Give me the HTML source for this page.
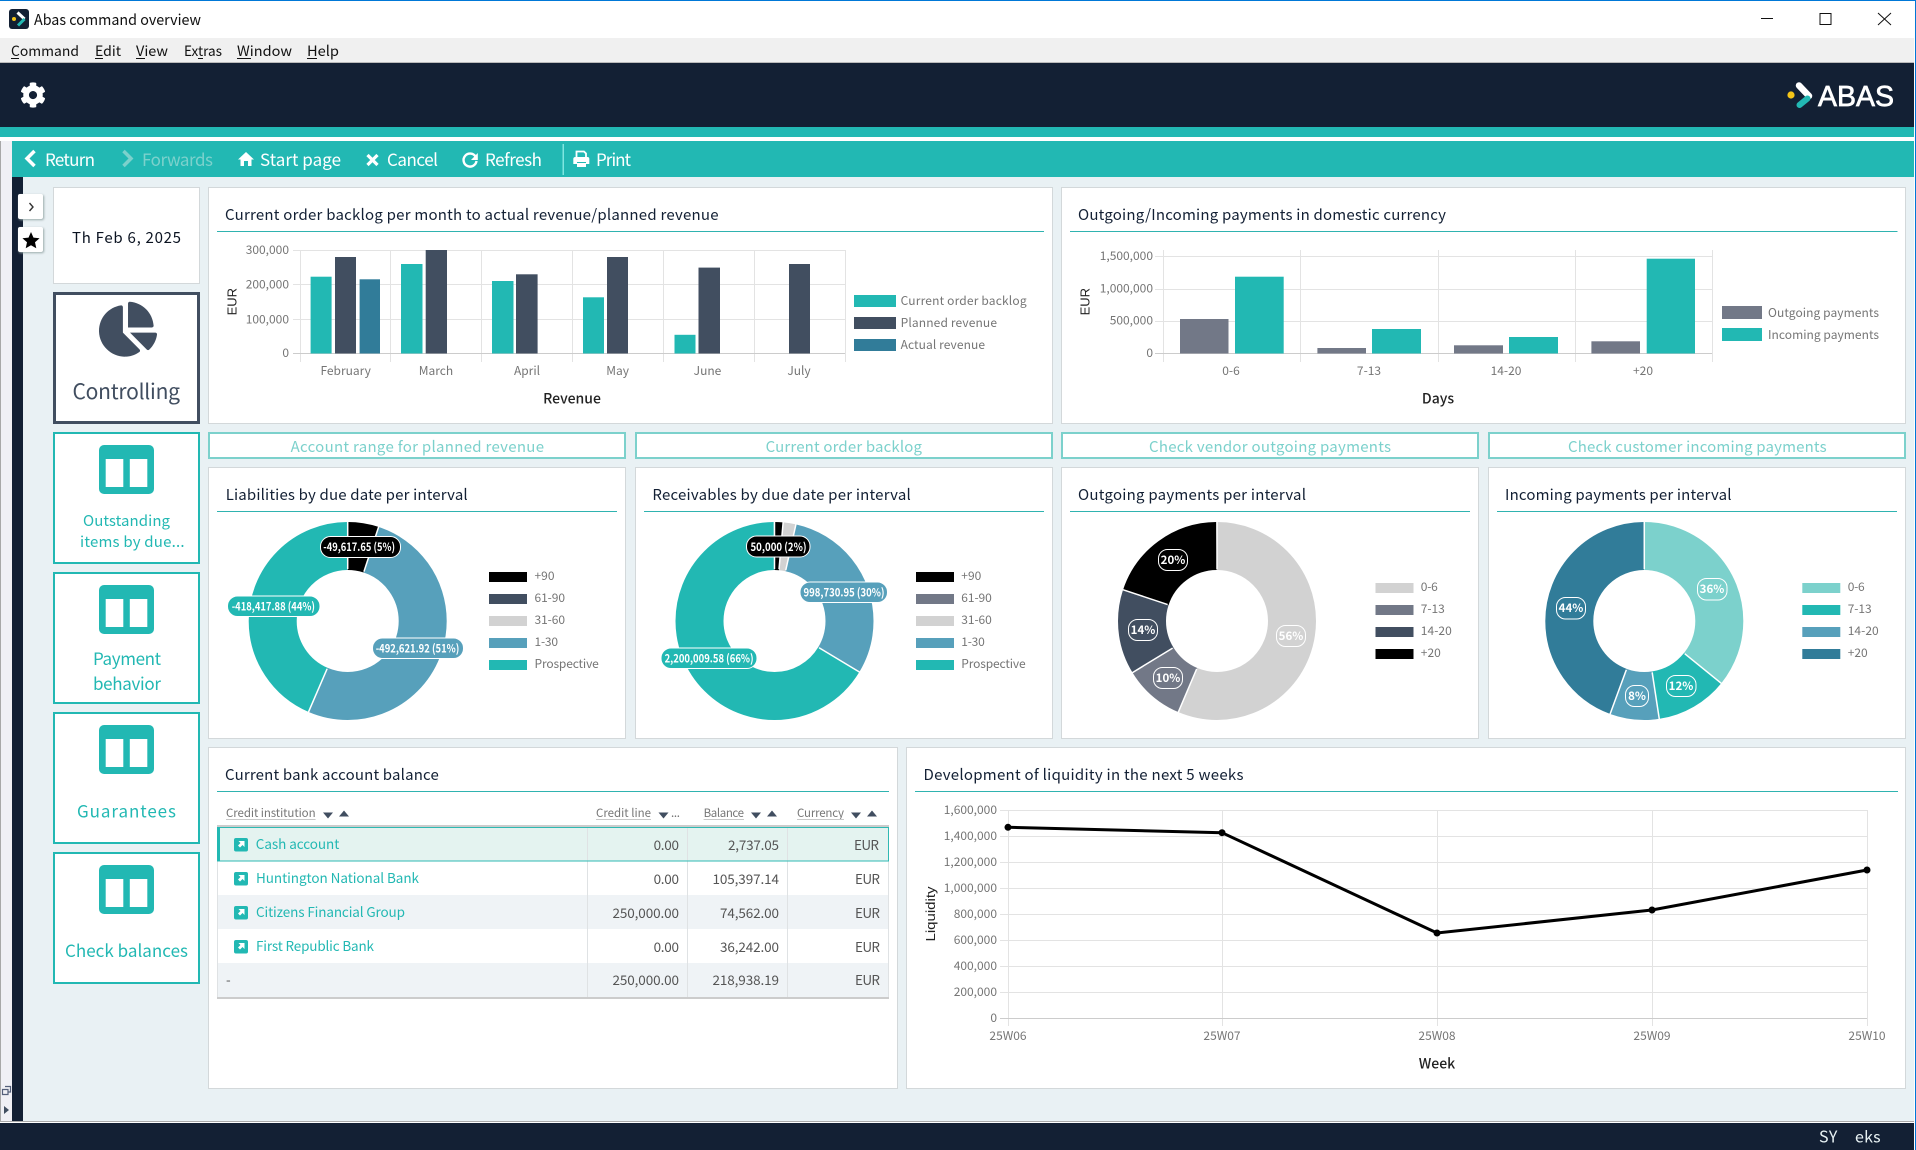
<!DOCTYPE html>
<html lang="en"><head><meta charset="utf-8"><title>Abas command overview</title>
<style>
html,body{margin:0;padding:0;width:1916px;height:1150px;overflow:hidden;background:#fff}
.b{position:absolute;box-sizing:border-box}
.p{position:absolute;box-sizing:border-box;background:#fff;border:1px solid #d3d8da}
.t{position:absolute;box-sizing:border-box;background:#fff;border:2px solid #22b8b3}
.l{position:absolute;box-sizing:border-box;background:#fff;border:2px solid #7cd1cc}
svg{position:absolute;left:0;top:0}
text{font-family:"Noto Sans CJK JP","Liberation Sans",sans-serif;font-size:12px;fill:#757575}
.h{font-size:15px;fill:#132034}
.tb{font-size:17px;fill:#fff}
.m{font-size:14px;fill:#111}
.ln{font-size:15px;fill:#7cd1cc}
.ti{font-size:15px;fill:#22b8b3}
.tl{font-size:17px;fill:#22b8b3}
.ax{font-size:14px;font-weight:500;fill:#222}
.ro{font-family:"Liberation Sans",sans-serif;font-size:13px;fill:#222}
.pl{font-size:11.5px;font-weight:700;fill:#fff}
.th{font-size:11.5px;fill:#777}
.c{font-size:13.5px;fill:#555}
.n{font-size:13.5px;fill:#22b8b3}
</style></head><body>
<div class="b" style="left:0;top:0;width:1916px;height:1px;background:#0078d7"></div>
<div class="b" style="left:1915px;top:0;width:1px;height:1150px;background:#0078d7"></div>
<div class="b" style="left:0;top:38px;width:1914px;height:24px;background:#f0f0f0"></div>
<div class="b" style="left:0;top:62px;width:1914px;height:1px;background:#bbb"></div>
<div class="b" style="left:0;top:63px;width:1914px;height:64px;background:#132034"></div>
<div class="b" style="left:0;top:127px;width:1914px;height:10px;background:#22b8b3"></div>
<div class="b" style="left:0;top:141px;width:1px;height:980px;background:#a8a8a8"></div>
<div class="b" style="left:1px;top:141px;width:11px;height:980px;background:#f0f0f5"></div>
<div class="b" style="left:12px;top:141px;width:1902px;height:36px;background:#22b8b3"></div>
<div class="b" style="left:12px;top:177px;width:11px;height:944px;background:#132034"></div>
<div class="b" style="left:23px;top:177px;width:1891px;height:944px;background:#e9f1f4"></div>
<div class="b" style="left:0;top:1121px;width:1914px;height:1px;background:#aaa"></div>
<div class="b" style="left:0;top:1123px;width:1914px;height:27px;background:#132034"></div>

<div class="b" style="left:18px;top:194px;width:25px;height:25px;background:#fff;border-radius:2px;box-shadow:1px 1px 2px #9aa"></div>
<div class="b" style="left:18px;top:227px;width:25px;height:25px;background:#fff;border-radius:2px;box-shadow:1px 1px 2px #9aa"></div>

<div class="p" style="left:53px;top:187px;width:147px;height:97px"></div>
<div class="b" style="left:53px;top:292px;width:147px;height:132px;background:#fff;border:3px solid #414e60"></div>
<div class="t" style="left:53px;top:432px;width:147px;height:132px"></div>
<div class="t" style="left:53px;top:572px;width:147px;height:132px"></div>
<div class="t" style="left:53px;top:712px;width:147px;height:132px"></div>
<div class="t" style="left:53px;top:852px;width:147px;height:132px"></div>

<div class="p" style="left:208px;top:187px;width:845px;height:237px"></div>
<div class="p" style="left:1061px;top:187px;width:845px;height:237px"></div>

<div class="l" style="left:208px;top:432px;width:418px;height:27px"></div>
<div class="l" style="left:635px;top:432px;width:418px;height:27px"></div>
<div class="l" style="left:1061px;top:432px;width:418px;height:27px"></div>
<div class="l" style="left:1488px;top:432px;width:418px;height:27px"></div>

<div class="p" style="left:208px;top:467px;width:418px;height:272px"></div>
<div class="p" style="left:635px;top:467px;width:418px;height:272px"></div>
<div class="p" style="left:1061px;top:467px;width:418px;height:272px"></div>
<div class="p" style="left:1488px;top:467px;width:418px;height:272px"></div>

<div class="p" style="left:208px;top:747px;width:690px;height:342px"></div>
<div class="p" style="left:906px;top:747px;width:1000px;height:342px"></div>

<svg width="1916" height="1150" viewBox="0 0 1916 1150" xmlns="http://www.w3.org/2000/svg">
<!-- title bar -->
<rect x="9" y="9" width="20" height="20" rx="3" fill="#132034"/>
<circle cx="14" cy="19" r="2" fill="#f5c518"/>
<path d="M17.5 12.5L24.5 19" stroke="#fff" stroke-width="3" fill="none"/>
<path d="M24.5 19L18 25.5" stroke="#22b8b3" stroke-width="3" fill="none"/>
<text x="34" y="25" class="m" style="font-size:15px" textLength="167" lengthAdjust="spacingAndGlyphs">Abas command overview</text>
<rect x="1761" y="18" width="12" height="1" fill="#111"/>
<rect x="1820" y="13.500" width="11" height="11" fill="none" stroke="#111" stroke-width="1"/>
<path d="M1878 13L1891 25M1891 13L1878 25" stroke="#111" stroke-width="1" fill="none"/>
<!-- menu -->
<text x="11" y="56" class="m" textLength="68" lengthAdjust="spacingAndGlyphs">Command</text>
<text x="95" y="56" class="m" textLength="26" lengthAdjust="spacingAndGlyphs">Edit</text>
<text x="136" y="56" class="m" textLength="32" lengthAdjust="spacingAndGlyphs">View</text>
<text x="184" y="56" class="m" textLength="38" lengthAdjust="spacingAndGlyphs">Extras</text>
<text x="237" y="56" class="m" textLength="55" lengthAdjust="spacingAndGlyphs">Window</text>
<text x="307" y="56" class="m" textLength="32" lengthAdjust="spacingAndGlyphs">Help</text>
<g fill="#111"><rect x="11" y="58" width="8" height="1"/><rect x="95" y="58" width="8" height="1"/><rect x="136" y="58" width="9" height="1"/><rect x="198" y="58" width="5" height="1"/><rect x="237" y="58" width="14" height="1"/><rect x="307" y="58" width="10" height="1"/></g>
<!-- gear -->
<path transform="translate(20 82) scale(.0508)" fill="#fff" d="M487.4 315.7l-42.6-24.6c4.3-23.2 4.3-47 0-70.2l42.6-24.6c4.9-2.8 7.1-8.6 5.5-14-11.1-35.6-30-67.8-54.7-94.6-3.8-4.1-10-5.1-14.8-2.3L380.8 110c-17.9-15.4-38.5-27.3-60.8-35.1V25.8c0-5.6-3.9-10.5-9.4-11.7-36.7-8.2-74.3-7.8-109.2 0-5.5 1.2-9.4 6.1-9.4 11.7V75c-22.2 7.9-42.8 19.8-60.8 35.1L88.7 85.5c-4.9-2.8-11-1.9-14.8 2.3-24.7 26.7-43.6 58.9-54.7 94.6-1.7 5.4 .6 11.2 5.5 14L67.3 221c-4.3 23.2-4.3 47 0 70.2l-42.6 24.6c-4.9 2.8-7.1 8.6-5.5 14 11.1 35.6 30 67.8 54.7 94.6 3.8 4.1 10 5.1 14.8 2.3l42.6-24.6c17.9 15.4 38.5 27.3 60.8 35.1v49.2c0 5.6 3.9 10.5 9.4 11.7 36.7 8.2 74.3 7.8 109.2 0 5.5-1.2 9.4-6.1 9.4-11.7v-49.2c22.2-7.9 42.8-19.8 60.8-35.1l42.6 24.6c4.9 2.8 11 1.9 14.8-2.3 24.7-26.7 43.6-58.9 54.7-94.6 1.5-5.5-.7-11.3-5.6-14.1zM256 336c-44.1 0-80-35.9-80-80s35.9-80 80-80 80 35.9 80 80-35.9 80-80 80z"/>
<!-- logo -->
<circle cx="1791" cy="95" r="3.600" fill="#f5c518"/>
<path d="M1799 85.500L1809 96" stroke="#fff" stroke-width="6.500" stroke-linecap="round" fill="none"/>
<path d="M1807.500 98.500L1799.500 105" stroke="#22b8b3" stroke-width="6" stroke-linecap="round" fill="none"/>
<text x="1818" y="106" style="font-family:'Liberation Sans',sans-serif;font-size:28.500px;fill:#fff;stroke:#fff;stroke-width:.7px" textLength="76" lengthAdjust="spacingAndGlyphs">ABAS</text>
<!-- toolbar -->
<path d="M34.500 151L27 158.500L34.500 166" stroke="#fff" stroke-width="3.500" fill="none"/>
<text x="45" y="166" class="tb" textLength="50">Return</text>
<path d="M123.500 151L131 158.500L123.500 166" stroke="#7cd1cc" stroke-width="3.500" fill="none"/>
<text x="142" y="166" class="tb" style="fill:#7cd1cc" textLength="71">Forwards</text>
<path d="M246 152L238 159.500L240.500 159.500L240.500 166L244 166L244 161L248 161L248 166L251.500 166L251.500 159.500L254 159.500Z" fill="#fff"/>
<text x="260" y="166" class="tb" textLength="81">Start page</text>
<path d="M367.500 155L377.500 165M377.500 155L367.500 165" stroke="#fff" stroke-width="3.200" fill="none"/>
<text x="387" y="166" class="tb" textLength="51">Cancel</text>
<path d="M475.500 156.500A6.500 6.500 0 1 0 476.500 161" stroke="#fff" stroke-width="2.400" fill="none"/>
<path d="M477.800 153L477.800 160L471 160Z" fill="#fff"/>
<text x="485" y="166" class="tb" textLength="57">Refresh</text>
<rect x="562.500" y="144" width="1.500" height="31" fill="#7fe6e0"/>
<path d="M576.500 158V151.500H584L586 153.500V158" fill="none" stroke="#fff" stroke-width="1.800"/>
<path d="M575.500 157H587.500Q589.300 157 589.300 159V164H586V162H577V164H573.300V159Q573.300 157 575.500 157Z" fill="#fff"/>
<rect x="577" y="163" width="9" height="4" fill="#fff"/>
<text x="596" y="166" class="tb" textLength="35">Print</text>
<!-- side buttons -->
<path d="M29.500 203L33 207L29.500 211" stroke="#333" stroke-width="1.400" fill="none"/>
<polygon fill="#000" points="31,232 33.470,237.600 39.560,238.200 35,242.300 36.290,248.280 31,245.200 25.710,248.280 27,242.300 22.440,238.200 28.530,237.600"/>
<path d="M5 1086.500H10.500V1092H8M2.500 1089.500H8V1094.500H2.500Z" fill="none" stroke="#55607a" stroke-width="1.200"/>
<polygon points="4,1106 9,1110 4,1114" fill="#414e60"/>
<!-- tiles -->
<text x="72" y="243" class="h" style="fill:#0a1220" textLength="109">Th Feb 6, 2025</text>
<path transform="translate(99 301.700) scale(.1067 .1074)" fill="#414e60" d="M527.790 288H290.500l158.030 158.030c6.040 6.040 15.980 6.530 22.190 .68 38.700-36.460 65.320-85.610 73.130-140.860 1.340-9.460-6.510-17.850-16.060-17.850zm-15.830-64.800C503.720 103.740 408.260 8.280 288.800 .04 279.680-.59 272 7.100 272 16.240V240h223.770c9.140 0 16.820-7.680 16.190-16.800zM224 288V50.710c0-9.550-8.390-17.400-17.840-16.060C86.990 51.490-4.100 155.600 .14 280.370 4.500 408.510 114.830 513.590 243.030 511.980c50.400-.63 96.970-16.870 135.260-44.030 7.900-5.600 8.420-17.230 1.570-24.080L224 288z"/>
<text x="72.500" y="399" style="font-size:21px;fill:#414e60" textLength="107.500">Controlling</text>
<g fill="#22b8b3"><rect x="99" y="445" width="55" height="49" rx="5"/><rect x="99" y="585" width="55" height="49" rx="5"/><rect x="99" y="725" width="55" height="49" rx="5"/><rect x="99" y="865" width="55" height="49" rx="5"/></g>
<g fill="#fff"><rect x="105.700" y="459" width="17.600" height="28"/><rect x="129.800" y="459" width="17.500" height="28"/><rect x="105.700" y="599" width="17.600" height="28"/><rect x="129.800" y="599" width="17.500" height="28"/><rect x="105.700" y="739" width="17.600" height="28"/><rect x="129.800" y="739" width="17.500" height="28"/><rect x="105.700" y="879" width="17.600" height="28"/><rect x="129.800" y="879" width="17.500" height="28"/></g>
<text x="83" y="526" class="ti" textLength="87">Outstanding</text>
<text x="80" y="547" class="ti" textLength="104.500">items by due...</text>
<text x="93" y="665" class="tl" textLength="68">Payment</text>
<text x="93" y="690" class="tl" textLength="68">behavior</text>
<text x="77" y="817.500" class="tl" textLength="99">Guarantees</text>
<text x="65" y="957" class="tl" textLength="123">Check balances</text>
<!-- panel titles -->
<text x="225" y="220" class="h" textLength="493.500">Current order backlog per month to actual revenue/planned revenue</text>
<text x="1078" y="220" class="h" textLength="368">Outgoing/Incoming payments in domestic currency</text>
<g fill="#2fb3b0"><rect x="217" y="231" width="827" height="1"/><rect x="1070" y="231" width="827.500" height="1"/><rect x="217" y="511" width="400" height="1"/><rect x="644" y="511" width="400" height="1"/><rect x="1070" y="511" width="400" height="1"/><rect x="1497" y="511" width="400" height="1"/><rect x="217" y="791" width="672" height="1"/><rect x="915" y="791" width="983" height="1"/></g>
<text x="290.600" y="452" class="ln" textLength="253.400">Account range for planned revenue</text>
<text x="765.600" y="452" class="ln" textLength="156.400">Current order backlog</text>
<text x="1149" y="452" class="ln" textLength="242">Check vendor outgoing payments</text>
<text x="1568" y="452" class="ln" textLength="258.600">Check customer incoming payments</text>
<text x="225.700" y="500" class="h" textLength="242">Liabilities by due date per interval</text>
<text x="652.400" y="500" class="h" textLength="258.400">Receivables by due date per interval</text>
<text x="1078" y="500" class="h" textLength="228">Outgoing payments per interval</text>
<text x="1505" y="500" class="h" textLength="226.500">Incoming payments per interval</text>
<text x="225" y="780" class="h" textLength="213.800">Current bank account balance</text>
<text x="923.500" y="780" class="h" textLength="320">Development of liquidity in the next 5 weeks</text>

<!-- chart 1 -->
<g stroke="#e3e3e3" stroke-width="1">
<path d="M293 250.500H845M293 284.500H845M293 319.500H845"/>
<path d="M300.500 250V362M390.500 250V362M481.500 250V362M572.500 250V362M663.500 250V362M754.500 250V362M845.500 250V362"/>
</g>
<path d="M293 353.500H845" stroke="#ccc" stroke-width="1"/>
<g fill="#22b8b3"><rect x="310.600" y="276.700" width="21" height="76.800"/><rect x="401" y="264" width="21.500" height="89.500"/><rect x="492" y="281" width="21.500" height="72.500"/><rect x="583" y="297.300" width="21" height="56.200"/><rect x="674.500" y="334.800" width="21" height="18.700"/></g>
<g fill="#414e60"><rect x="335" y="257" width="21" height="96.500"/><rect x="425.700" y="250" width="21.300" height="103.500"/><rect x="516" y="274.300" width="21.600" height="79.200"/><rect x="607" y="257" width="21" height="96.500"/><rect x="698.500" y="267.600" width="21.500" height="85.900"/><rect x="789" y="264" width="21" height="89.500"/></g>
<rect x="359.600" y="279.300" width="20.400" height="74.200" fill="#317c99"/>
<g text-anchor="end"><text x="289" y="254">300,000</text><text x="289" y="288.500">200,000</text><text x="289" y="323.500">100,000</text><text x="289" y="357">0</text></g>
<g text-anchor="middle"><text x="345.700" y="375">February</text><text x="436" y="375">March</text><text x="527" y="375">April</text><text x="617.600" y="375">May</text><text x="707.500" y="375">June</text><text x="799" y="375">July</text></g>
<text x="572" y="403.500" class="ax" text-anchor="middle">Revenue</text>
<text class="ro" transform="translate(236.500 301.700) rotate(-90)" text-anchor="middle">EUR</text>
<rect x="854" y="295" width="42" height="12" fill="#22b8b3"/><rect x="854" y="317" width="42" height="12" fill="#414e60"/><rect x="854" y="339" width="42" height="12" fill="#317c99"/>
<text x="900.600" y="305" textLength="126">Current order backlog</text>
<text x="900.600" y="327" textLength="96.400">Planned revenue</text>
<text x="900.600" y="349" textLength="84.400">Actual revenue</text>

<!-- chart 2 -->
<g stroke="#e3e3e3" stroke-width="1">
<path d="M1155 256.500H1712M1155 289.500H1712M1155 321.500H1712"/>
<path d="M1163.500 250V362M1300.500 250V362M1438.500 250V362M1575.500 250V362M1712.500 250V362"/>
</g>
<path d="M1155 353.500H1712" stroke="#ccc"/>
<g fill="#727887"><rect x="1180" y="319" width="48.500" height="34.500"/><rect x="1317.400" y="348" width="48.600" height="5.500"/><rect x="1454" y="345.300" width="49" height="8.200"/><rect x="1591.400" y="341.300" width="48.600" height="12.200"/></g>
<g fill="#22b8b3"><rect x="1235" y="276.700" width="48.700" height="76.800"/><rect x="1372" y="329" width="49" height="24.500"/><rect x="1509" y="337" width="49" height="16.500"/><rect x="1646.700" y="258.700" width="48.300" height="94.800"/></g>
<g text-anchor="end"><text x="1153" y="260">1,500,000</text><text x="1153" y="292.500">1,000,000</text><text x="1153" y="324.500">500,000</text><text x="1153" y="357">0</text></g>
<g text-anchor="middle"><text x="1231" y="375">0-6</text><text x="1369" y="375">7-13</text><text x="1506" y="375">14-20</text><text x="1643" y="375">+20</text></g>
<text x="1438" y="403.500" class="ax" text-anchor="middle">Days</text>
<text class="ro" transform="translate(1089.500 301.700) rotate(-90)" text-anchor="middle">EUR</text>
<rect x="1722" y="306" width="40" height="13" fill="#727887"/><rect x="1722" y="328" width="40" height="13" fill="#22b8b3"/>
<text x="1768" y="317" textLength="111">Outgoing payments</text>
<text x="1768" y="339" textLength="111">Incoming payments</text>

<!-- donut 1 -->
<g fill="none" stroke-width="48" transform="rotate(-90 347.700 621)">
<circle cx="347.700" cy="621" r="75" pathLength="360" stroke="#000" stroke-dasharray="18.200 360"/>
<circle cx="347.700" cy="621" r="75" pathLength="360" stroke="#57a0bb" stroke-dasharray="185.100 360" stroke-dashoffset="-18.200"/>
<circle cx="347.700" cy="621" r="75" pathLength="360" stroke="#22b8b3" stroke-dasharray="156.700 360" stroke-dashoffset="-203.300"/>
</g>
<g stroke="#fff" stroke-width="1.500"><line x1="347.700" y1="569" x2="347.700" y2="521" /><line x1="347.700" y1="569" x2="347.700" y2="521" transform="rotate(18.200 347.700 621)"/><line x1="347.700" y1="569" x2="347.700" y2="521" transform="rotate(203.300 347.700 621)"/></g>
<g stroke="#fff"><rect x="320.500" y="536.500" width="80" height="21" rx="10" fill="#000"/><rect x="227.500" y="596" width="92.500" height="20.500" rx="10" fill="#22b8b3"/><rect x="372.500" y="638" width="91" height="20.500" rx="10" fill="#57a0bb"/></g>
<text x="323.300" y="551" class="pl" textLength="71.700" lengthAdjust="spacingAndGlyphs">-49,617.65 (5%)</text>
<text x="231.700" y="610.500" class="pl" textLength="83.300" lengthAdjust="spacingAndGlyphs">-418,417.88 (44%)</text>
<text x="375.700" y="652.500" class="pl" textLength="83.600" lengthAdjust="spacingAndGlyphs">-492,621.92 (51%)</text>
<rect x="489" y="572" width="38" height="10" fill="#000"/><rect x="489" y="594" width="38" height="10" fill="#414e60"/><rect x="489" y="616" width="38" height="10" fill="#d2d2d2"/><rect x="489" y="638" width="38" height="10" fill="#57a0bb"/><rect x="489" y="660" width="38" height="10" fill="#22b8b3"/>
<text x="534.500" y="580" textLength="20">+90</text><text x="534.500" y="602" textLength="30.500">61-90</text><text x="534.500" y="624" textLength="30.500">31-60</text><text x="534.500" y="646" textLength="23.500">1-30</text><text x="534.500" y="668" textLength="64.300">Prospective</text>

<!-- donut 2 -->
<g fill="none" stroke-width="48" transform="rotate(-90 774.500 621)">
<circle cx="774.500" cy="621" r="75" pathLength="360" stroke="#000" stroke-dasharray="5 360"/>
<circle cx="774.500" cy="621" r="75" pathLength="360" stroke="#d2d2d2" stroke-dasharray="7.500 360" stroke-dashoffset="-5"/>
<circle cx="774.500" cy="621" r="75" pathLength="360" stroke="#57a0bb" stroke-dasharray="108.500 360" stroke-dashoffset="-12.500"/>
<circle cx="774.500" cy="621" r="75" pathLength="360" stroke="#22b8b3" stroke-dasharray="239 360" stroke-dashoffset="-121"/>
</g>
<g stroke="#fff" stroke-width="1.500"><line x1="774.500" y1="569" x2="774.500" y2="521"/><line x1="774.500" y1="569" x2="774.500" y2="521" transform="rotate(5 774.500 621)"/><line x1="774.500" y1="569" x2="774.500" y2="521" transform="rotate(12.500 774.500 621)"/><line x1="774.500" y1="569" x2="774.500" y2="521" transform="rotate(121 774.500 621)"/></g>
<g stroke="#fff"><rect x="746.500" y="536" width="63.500" height="21" rx="10" fill="#000"/><rect x="800" y="582" width="87.500" height="20.500" rx="10" fill="#57a0bb"/><rect x="661" y="648" width="96" height="20.500" rx="10" fill="#22b8b3"/></g>
<text x="750.500" y="551" class="pl" textLength="56" lengthAdjust="spacingAndGlyphs">50,000 (2%)</text>
<text x="803.500" y="596.500" class="pl" textLength="81" lengthAdjust="spacingAndGlyphs">998,730.95 (30%)</text>
<text x="664.600" y="662.500" class="pl" textLength="89" lengthAdjust="spacingAndGlyphs">2,200,009.58 (66%)</text>
<rect x="916" y="572" width="38" height="10" fill="#000"/><rect x="916" y="594" width="38" height="10" fill="#727887"/><rect x="916" y="616" width="38" height="10" fill="#d2d2d2"/><rect x="916" y="638" width="38" height="10" fill="#57a0bb"/><rect x="916" y="660" width="38" height="10" fill="#22b8b3"/>
<text x="961.300" y="580" textLength="20">+90</text><text x="961.300" y="602" textLength="30.500">61-90</text><text x="961.300" y="624" textLength="30.500">31-60</text><text x="961.300" y="646" textLength="23.500">1-30</text><text x="961.300" y="668" textLength="64.300">Prospective</text>

<!-- donut 3 -->
<g fill="none" stroke-width="48" transform="rotate(-90 1217 621)">
<circle cx="1217" cy="621" r="75" pathLength="360" stroke="#d2d2d2" stroke-dasharray="203 360"/>
<circle cx="1217" cy="621" r="75" pathLength="360" stroke="#727887" stroke-dasharray="35.600 360" stroke-dashoffset="-203"/>
<circle cx="1217" cy="621" r="75" pathLength="360" stroke="#414e60" stroke-dasharray="49.800 360" stroke-dashoffset="-238.600"/>
<circle cx="1217" cy="621" r="75" pathLength="360" stroke="#000" stroke-dasharray="71.600 360" stroke-dashoffset="-288.400"/>
</g>
<g stroke="#fff" stroke-width="1.500"><line x1="1217" y1="569" x2="1217" y2="521"/><line x1="1217" y1="569" x2="1217" y2="521" transform="rotate(203 1217 621)"/><line x1="1217" y1="569" x2="1217" y2="521" transform="rotate(238.600 1217 621)"/><line x1="1217" y1="569" x2="1217" y2="521" transform="rotate(288.400 1217 621)"/></g>
<g stroke="#fff" fill="none"><rect x="1158.500" y="549.500" width="29" height="21" rx="9"/><rect x="1128.500" y="619.500" width="29" height="21" rx="9"/><rect x="1153.500" y="667.500" width="29" height="21" rx="9"/><rect x="1276.500" y="625.500" width="29" height="21" rx="9"/></g>
<g text-anchor="middle"><text x="1173" y="564" class="pl">20%</text><text x="1143" y="634" class="pl">14%</text><text x="1168" y="682" class="pl">10%</text><text x="1291" y="640" class="pl">56%</text></g>
<rect x="1375.500" y="583" width="38" height="10" fill="#d2d2d2"/><rect x="1375.500" y="605" width="38" height="10" fill="#727887"/><rect x="1375.500" y="627" width="38" height="10" fill="#414e60"/><rect x="1375.500" y="649" width="38" height="10" fill="#000"/>
<text x="1420.800" y="591" textLength="17">0-6</text><text x="1420.800" y="613" textLength="24">7-13</text><text x="1420.800" y="635" textLength="31">14-20</text><text x="1420.800" y="657" textLength="20">+20</text>

<!-- donut 4 -->
<g fill="none" stroke-width="48" transform="rotate(-90 1644.300 621)">
<circle cx="1644.300" cy="621" r="75" pathLength="360" stroke="#7cd1cc" stroke-dasharray="129 360"/>
<circle cx="1644.300" cy="621" r="75" pathLength="360" stroke="#22b8b3" stroke-dasharray="42.300 360" stroke-dashoffset="-129"/>
<circle cx="1644.300" cy="621" r="75" pathLength="360" stroke="#57a0bb" stroke-dasharray="28.900 360" stroke-dashoffset="-171.300"/>
<circle cx="1644.300" cy="621" r="75" pathLength="360" stroke="#317c99" stroke-dasharray="159.800 360" stroke-dashoffset="-200.200"/>
</g>
<g stroke="#fff" stroke-width="1.500"><line x1="1644.300" y1="569" x2="1644.300" y2="521"/><line x1="1644.300" y1="569" x2="1644.300" y2="521" transform="rotate(129 1644.300 621)"/><line x1="1644.300" y1="569" x2="1644.300" y2="521" transform="rotate(171.300 1644.300 621)"/><line x1="1644.300" y1="569" x2="1644.300" y2="521" transform="rotate(200.200 1644.300 621)"/></g>
<g stroke="#fff" fill="none"><rect x="1697.500" y="578.500" width="29.500" height="21.500" rx="9"/><rect x="1666.500" y="675.500" width="29.500" height="21" rx="9"/><rect x="1625.500" y="685.500" width="23" height="21" rx="9"/><rect x="1556.500" y="597.500" width="29" height="21.500" rx="9"/></g>
<g text-anchor="middle"><text x="1712" y="593" class="pl">36%</text><text x="1681" y="690" class="pl">12%</text><text x="1637" y="700" class="pl">8%</text><text x="1571" y="612" class="pl">44%</text></g>
<rect x="1802.300" y="583" width="38" height="10" fill="#7cd1cc"/><rect x="1802.300" y="605" width="38" height="10" fill="#22b8b3"/><rect x="1802.300" y="627" width="38" height="10" fill="#57a0bb"/><rect x="1802.300" y="649" width="38" height="10" fill="#317c99"/>
<text x="1847.700" y="591" textLength="17">0-6</text><text x="1847.700" y="613" textLength="24">7-13</text><text x="1847.700" y="635" textLength="31">14-20</text><text x="1847.700" y="657" textLength="20">+20</text>

<!-- table -->
<text x="226" y="817" class="th" textLength="89.600">Credit institution</text>
<text x="596" y="817" class="th" textLength="55">Credit line</text>
<text x="703.600" y="817" class="th" textLength="40.400">Balance</text>
<text x="797" y="817" class="th" textLength="47">Currency</text>
<g fill="#c8c8c8"><rect x="226" y="819" width="89.600" height="1"/><rect x="596" y="819" width="55" height="1"/><rect x="703.600" y="819" width="40.400" height="1"/><rect x="797" y="819" width="47" height="1"/></g>
<g fill="#414e60"><path d="M323 812.500h10l-5 6z"/><path d="M339 816.500h10l-5-6z"/><path d="M658.500 812.500h10l-5 6z"/><path d="M751 812.500h10l-5 6z"/><path d="M767 816.500h10l-5-6z"/><path d="M851 812.500h10l-5 6z"/><path d="M867 816.500h10l-5-6z"/></g>
<text x="671" y="817" class="th" textLength="9">...</text>
<rect x="217" y="825" width="672" height="2" fill="#ccc"/>
<rect x="217" y="827" width="672" height="34" fill="#e4f3f0" stroke="none"/>
<rect x="217" y="895" width="672" height="34" fill="#eff3f6"/>
<rect x="217" y="963" width="672" height="34" fill="#eff3f6"/>
<path d="M587.500 827V997M687.500 827V997M787.500 827V997M217.500 827V997M888.500 827V997" stroke="#dfe2e4" stroke-width="1"/>
<rect x="217.500" y="827.500" width="671" height="33.500" fill="none" stroke="#2fb9b3" stroke-width="1"/>
<rect x="217" y="827" width="3" height="34" fill="#22b8b3"/>
<rect x="217" y="997" width="672" height="2" fill="#ccc"/>
<g fill="#22b8b3"><rect x="234" y="838" width="14" height="13.500" rx="2"/><rect x="234" y="872" width="14" height="13.500" rx="2"/><rect x="234" y="906" width="14" height="13.500" rx="2"/><rect x="234" y="940" width="14" height="13.500" rx="2"/></g>
<g fill="#fff"><path d="M238.500 841h6v6l-2-2-2.500 2.500-2-2 2.500-2.500z"/><path d="M238.500 875h6v6l-2-2-2.500 2.500-2-2 2.500-2.500z"/><path d="M238.500 909h6v6l-2-2-2.500 2.500-2-2 2.500-2.500z"/><path d="M238.500 943h6v6l-2-2-2.500 2.500-2-2 2.500-2.500z"/></g>
<text x="255.800" y="849" class="n" textLength="83.500">Cash account</text>
<text x="256" y="883" class="n" textLength="163">Huntington National Bank</text>
<text x="256" y="917" class="n" textLength="149">Citizens Financial Group</text>
<text x="256" y="951" class="n" textLength="118">First Republic Bank</text>
<text x="226" y="985" class="c">-</text>
<g text-anchor="end" class="c">
<text x="679" y="850" class="c" textLength="25.400">0.00</text><text x="779" y="850" class="c" textLength="51">2,737.05</text><text x="879" y="850" class="c" textLength="25">EUR</text>
<text x="679" y="884" class="c" textLength="25.400">0.00</text><text x="779" y="884" class="c" textLength="66.500">105,397.14</text><text x="880" y="884" class="c" textLength="25">EUR</text>
<text x="679" y="918" class="c" textLength="66.500">250,000.00</text><text x="779" y="918" class="c" textLength="59">74,562.00</text><text x="880" y="918" class="c" textLength="25">EUR</text>
<text x="679" y="952" class="c" textLength="25.400">0.00</text><text x="779" y="952" class="c" textLength="59">36,242.00</text><text x="880" y="952" class="c" textLength="25">EUR</text>
<text x="679" y="985" class="c" textLength="66.500">250,000.00</text><text x="779" y="985" class="c" textLength="66.500">218,938.19</text><text x="880" y="985" class="c" textLength="25">EUR</text>
</g>

<!-- line chart -->
<g stroke="#e3e3e3" stroke-width="1">
<path d="M1000 810.500H1867M1000 836.500H1867M1000 862.500H1867M1000 888.500H1867M1000 914.500H1867M1000 940.500H1867M1000 966.500H1867M1000 992.500H1867"/>
<path d="M1008.500 810V1026M1222.500 810V1026M1437.500 810V1026M1652.500 810V1026M1867.500 810V1026"/>
</g>
<path d="M1000 1018.500H1867" stroke="#ccc"/>
<g text-anchor="end"><text x="997" y="814">1,600,000</text><text x="997" y="840">1,400,000</text><text x="997" y="866">1,200,000</text><text x="997" y="892">1,000,000</text><text x="997" y="918">800,000</text><text x="997" y="944">600,000</text><text x="997" y="970">400,000</text><text x="997" y="996">200,000</text><text x="997" y="1022">0</text></g>
<g text-anchor="middle"><text x="1008" y="1040">25W06</text><text x="1222" y="1040">25W07</text><text x="1437" y="1040">25W08</text><text x="1652" y="1040">25W09</text><text x="1867" y="1040">25W10</text></g>
<text x="1437" y="1068.500" class="ax" text-anchor="middle">Week</text>
<text class="ro" transform="translate(935 914) rotate(-90)" text-anchor="middle" textLength="55" lengthAdjust="spacingAndGlyphs">Liquidity</text>
<path d="M1008 827.300L1222 832.700L1437 933L1652 910L1867 870" fill="none" stroke="#000" stroke-width="3"/>
<g fill="#000"><circle cx="1008" cy="827.300" r="3.500"/><circle cx="1222" cy="832.700" r="3.500"/><circle cx="1437" cy="933" r="3.500"/><circle cx="1652" cy="910" r="3.500"/><circle cx="1867" cy="870" r="3.500"/></g>
<!-- footer -->
<text x="1819" y="1142.500" style="font-size:16px;fill:#e8f2f4" textLength="18.400">SY</text>
<text x="1855" y="1142.500" style="font-size:16px;fill:#e8f2f4" textLength="25.600">eks</text>
</svg>
</body></html>
